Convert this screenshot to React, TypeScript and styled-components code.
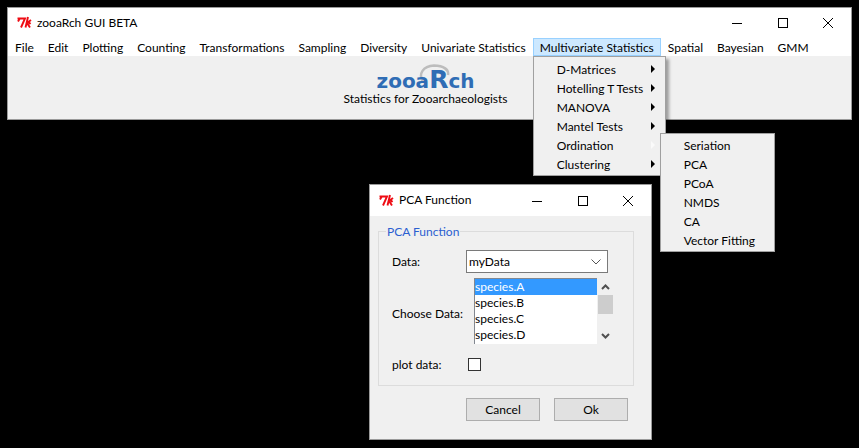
import React from 'react';
import styled, { createGlobalStyle } from 'styled-components';

const GlobalStyle = createGlobalStyle`
  html, body {
    margin: 0;
    padding: 0;
    background: #000;
    overflow: hidden;
  }
  body {
    font-family: Lato, 'Noto Sans', sans-serif;
    font-size: 12px;
    color: #000;
  }
`;

const Desktop = styled.div`
  position: relative;
  width: 859px;
  height: 448px;
  background: #000;
`;

const Window = styled.section<{ $left: number; $top: number; $width: number; $height: number }>`
  position: absolute;
  left: ${(p) => p.$left}px;
  top: ${(p) => p.$top}px;
  width: ${(p) => p.$width}px;
  height: ${(p) => p.$height}px;
  box-sizing: border-box;
  border: 1px solid #9a9a9a;
  background: #f0f0f0;
  display: flex;
  flex-direction: column;
`;

const TitleBar = styled.header<{ $height: number }>`
  height: ${(p) => p.$height}px;
  flex: none;
  background: #fff;
  display: flex;
  align-items: center;
  padding-left: 9px;
`;

const TkIcon = styled.svg`
  flex: none;
  margin-right: 4px;
`;

const TitleText = styled.span`
  flex: 1;
  padding-bottom: 2px;
  white-space: nowrap;
`;

const WinButtons = styled.div`
  display: flex;
  flex: none;
`;

const WinButton = styled.span`
  width: 45.5px;
  height: 29px;
  display: flex;
  align-items: center;
  justify-content: center;
`;

const MenuBar = styled.nav`
  height: 18px;
  flex: none;
  background: #fff;
  display: flex;
`;

const MenuItem = styled.div<{ $open?: boolean }>`
  position: relative;
  box-sizing: border-box;
  height: 18px;
  padding: 0 ${(p) => (p.$open ? 6 : 7)}px;
  white-space: nowrap;
  border: ${(p) => (p.$open ? '1px solid #99d1ff' : 'none')};
  background: ${(p) => (p.$open ? '#cce8ff' : 'transparent')};
  line-height: ${(p) => (p.$open ? 17 : 19)}px;
`;

const MainBody = styled.div`
  flex: 1;
  display: flex;
  flex-direction: column;
  align-items: center;
  padding: 13px 8px 0 0;
`;

const Logo = styled.div`
  position: relative;
  height: 22px;
  display: flex;
  align-items: baseline;
  font-family: 'DejaVu Sans', sans-serif;
  font-weight: 700;
  font-size: 20px;
  line-height: 22px;
  color: #2f6db5;
`;

const LogoRing = styled.svg`
  position: absolute;
  left: 41px;
  top: -5px;
`;

const LogoWord = styled.span`
  position: relative;
`;

const LogoR = styled.span`
  position: relative;
  font-size: 25px;
  line-height: 22px;
`;

const Subtitle = styled.div`
  line-height: 16px;
`;

const Dropdown = styled.div<{ $left: number; $top: number; $width: number; $height: number; $pad: number }>`
  position: absolute;
  z-index: 5;
  left: ${(p) => p.$left}px;
  top: ${(p) => p.$top}px;
  width: ${(p) => p.$width}px;
  height: ${(p) => p.$height}px;
  box-sizing: border-box;
  border: 1px solid #a0a0a0;
  padding-top: ${(p) => p.$pad}px;
  background: #f0f0f0;
  box-shadow: 3px 3px 3px rgba(0, 0, 0, 0.35);
`;

const DropRow = styled.div<{ $inset: number }>`
  position: relative;
  height: 19px;
  line-height: 19px;
  padding-left: ${(p) => p.$inset}px;
  white-space: nowrap;
`;

const Arrow = styled.i<{ $dim?: boolean }>`
  position: absolute;
  right: 10px;
  top: 5px;
  width: 0;
  height: 0;
  border-left: 4px solid ${(p) => (p.$dim ? '#fafafa' : '#000')};
  border-top: 4px solid transparent;
  border-bottom: 4px solid transparent;
`;

const DialogBody = styled.div`
  flex: 1;
  padding: 8px 17px 0 8px;
  display: flex;
  flex-direction: column;
`;

const GroupBox = styled.fieldset`
  margin: 0;
  padding: 11px 0 0 13px;
  height: 162px;
  box-sizing: border-box;
  border: 1px solid #dcdcdc;
  min-width: 0;
`;

const GroupLegend = styled.legend`
  margin-left: -6px;
  padding: 0 1px;
  line-height: 15px;
  color: #2b5fd0;
`;

const FormRow = styled.div<{ $height: number; $top?: number }>`
  display: grid;
  grid-template-columns: 74px auto;
  align-items: center;
  height: ${(p) => p.$height}px;
  margin-top: ${(p) => p.$top ?? 0}px;
  white-space: nowrap;
`;

const ListLabel = styled.span`
  padding-top: 4px;
`;

const Combo = styled.div`
  box-sizing: border-box;
  width: 142px;
  height: 23px;
  border: 1px solid #7a7a7a;
  background: #fff;
  display: flex;
  align-items: center;
  justify-content: space-between;
  padding: 0 6px 0 2px;
`;

const ListWrap = styled.div`
  display: flex;
  margin-left: 8px;
`;

const ListBox = styled.ul`
  margin: 0;
  padding: 0;
  list-style: none;
  box-sizing: border-box;
  width: 123px;
  height: 66px;
  background: #fff;
  border-top: 1px solid #828790;
  border-left: 1px solid #828790;
`;

const ListRow = styled.li<{ $selected?: boolean }>`
  height: 16px;
  line-height: 16px;
  background: ${(p) => (p.$selected ? '#3399ff' : 'transparent')};
  color: ${(p) => (p.$selected ? '#fff' : '#000')};
`;

const ScrollBar = styled.div`
  width: 15px;
  height: 66px;
  margin-left: 1px;
  display: flex;
  flex-direction: column;
  align-items: center;
`;

const ScrollArrow = styled.svg`
  flex: none;
  margin: 6px 0 5px;
`;

const ScrollTrack = styled.div`
  flex: 1;
  width: 15px;
`;

const ScrollThumb = styled.div`
  width: 15px;
  height: 19px;
  background: #cdcdcd;
`;

const CheckBox = styled.span`
  display: block;
  box-sizing: border-box;
  width: 13px;
  height: 13px;
  margin-left: 2px;
  border: 1px solid #333;
  background: #fff;
`;

const ButtonRow = styled.div`
  display: flex;
  justify-content: flex-end;
  gap: 14px;
  margin-top: 12px;
  padding-right: 6px;
`;

const Button = styled.button`
  box-sizing: border-box;
  width: 74px;
  height: 23px;
  padding: 0;
  border: 1px solid #adadad;
  background: #e1e1e1;
  font: inherit;
  color: #000;
`;

const TkLogo = () => (
  <TkIcon width="16" height="16" viewBox="0 0 16 16">
    <path
      d="M0.5 3.5H8L4 12.5M2.5 4L1 6.5M11 2L8.5 12.5M14 5L10 8L13 12.5M11 6.5L13.5 9"
      stroke="#ee0c14"
      strokeWidth="1.9"
      fill="none"
    />
  </TkIcon>
);

const MinimizeIcon = () => (
  <svg width="10" height="10" viewBox="0 0 10 10">
    <path d="M0 5.5H10" stroke="#000" fill="none" />
  </svg>
);

const MaximizeIcon = () => (
  <svg width="10" height="10" viewBox="0 0 10 10">
    <rect x="0.5" y="0.5" width="9" height="9" stroke="#000" fill="none" />
  </svg>
);

const CloseIcon = () => (
  <svg width="10" height="10" viewBox="0 0 10 10">
    <path d="M0 0L10 10M10 0L0 10" stroke="#000" fill="none" />
  </svg>
);

const Controls = () => (
  <WinButtons>
    <WinButton><MinimizeIcon /></WinButton>
    <WinButton><MaximizeIcon /></WinButton>
    <WinButton><CloseIcon /></WinButton>
  </WinButtons>
);

const menus = [
  'File', 'Edit', 'Plotting', 'Counting', 'Transformations', 'Sampling',
  'Diversity', 'Univariate Statistics',
];
const menusAfter = ['Spatial', 'Bayesian', 'GMM'];
const multivariate = ['D-Matrices', 'Hotelling T Tests', 'MANOVA', 'Mantel Tests', 'Ordination', 'Clustering'];
const ordination = ['Seriation', 'PCA', 'PCoA', 'NMDS', 'CA', 'Vector Fitting'];
const species = ['species.A', 'species.B', 'species.C', 'species.D'];

const App = () => {
  return (
    <Desktop>
      <GlobalStyle />
      <Window $left={7} $top={7} $width={845} $height={113}>
        <TitleBar $height={30}>
          <TkLogo />
          <TitleText>zooaRch GUI BETA</TitleText>
          <Controls />
        </TitleBar>
        <MenuBar>
          {menus.map((m) => (
            <MenuItem key={m}>{m}</MenuItem>
          ))}
          <MenuItem $open>
            Multivariate Statistics
            <Dropdown $left={-1} $top={17} $width={133} $height={120} $pad={3}>
              {multivariate.map((m) => (
                <DropRow key={m} $inset={23}>
                  {m}
                  <Arrow $dim={m === 'Ordination'} />
                </DropRow>
              ))}
              <Dropdown $left={126} $top={76} $width={115} $height={119} $pad={2}>
                {ordination.map((m) => (
                  <DropRow key={m} $inset={23}>{m}</DropRow>
                ))}
              </Dropdown>
            </Dropdown>
          </MenuItem>
          {menusAfter.map((m) => (
            <MenuItem key={m}>{m}</MenuItem>
          ))}
        </MenuBar>
        <MainBody>
          <Logo>
            <LogoRing width="32" height="20" viewBox="0 0 32 20">
              <path d="M5 18C0 10 5 2 16 1.5C26 1.5 31 6 30 11" stroke="#bdbdbd" strokeWidth="2.5" fill="none" />
            </LogoRing>
            <LogoWord>zooa</LogoWord>
            <LogoR>R</LogoR>
            <LogoWord>ch</LogoWord>
          </Logo>
          <Subtitle>Statistics for Zooarchaeologists</Subtitle>
        </MainBody>
      </Window>

      <Window $left={369} $top={184} $width={283} $height={256}>
        <TitleBar $height={31}>
          <TkLogo />
          <TitleText>PCA Function</TitleText>
          <Controls />
        </TitleBar>
        <DialogBody>
          <GroupBox>
            <GroupLegend>PCA Function</GroupLegend>
            <FormRow $height={23}>
              <span>Data:</span>
              <Combo>
                <span>myData</span>
                <svg width="10" height="6" viewBox="0 0 10 6">
                  <path d="M0.5 0.5L5 5L9.5 0.5" stroke="#555" fill="none" />
                </svg>
              </Combo>
            </FormRow>
            <FormRow $height={66} $top={5}>
              <ListLabel>Choose Data:</ListLabel>
              <ListWrap>
                <ListBox>
                  {species.map((s, i) => (
                    <ListRow key={s} $selected={i === 0}>{s}</ListRow>
                  ))}
                </ListBox>
                <ScrollBar>
                  <ScrollArrow width="9" height="6" viewBox="0 0 9 6">
                    <path d="M1 5L4.5 1.5L8 5" stroke="#505050" strokeWidth="2" fill="none" />
                  </ScrollArrow>
                  <ScrollThumb />
                  <ScrollTrack />
                  <ScrollArrow width="9" height="6" viewBox="0 0 9 6">
                    <path d="M1 1L4.5 4.5L8 1" stroke="#505050" strokeWidth="2" fill="none" />
                  </ScrollArrow>
                </ScrollBar>
              </ListWrap>
            </FormRow>
            <FormRow $height={13} $top={13}>
              <span>plot data:</span>
              <CheckBox />
            </FormRow>
          </GroupBox>
          <ButtonRow>
            <Button>Cancel</Button>
            <Button>Ok</Button>
          </ButtonRow>
        </DialogBody>
      </Window>
    </Desktop>
  );
};

export default App;
